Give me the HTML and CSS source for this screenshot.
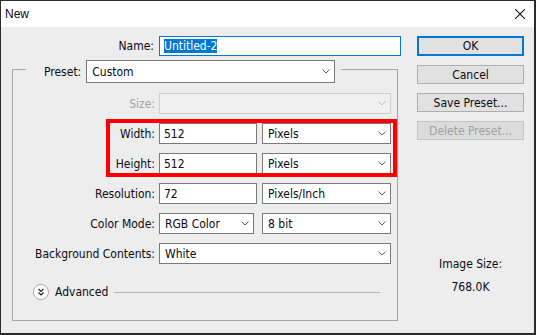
FILE: index.html
```html
<!DOCTYPE html>
<html>
<head>
    <title>New</title>
    <link rel="stylesheet" href="styles.css">
</head>
<body>
    <div class="dialog">
        <!-- Window title bar -->
        <div class="titlebar">
            <span class="title">New</span>
            <svg class="close" width="10" height="10" viewBox="0 0 10 10">
                <path d="M0 0L10 10M10 0L0 10" stroke="#111" stroke-width="1.1" fill="none"/>
            </svg>
        </div>

        <div class="content">
            <div class="main">
                <div class="name-row">
                    <span class="label">Name:</span>
                    <div class="field focused"><span class="selected">Untitled-2</span></div>
                </div>

                <fieldset class="group">
                    <legend class="preset">
                        <div class="preset-row">
                            <span class="preset-label">Preset:</span>
                            <div class="select preset-select">
                                <span>Custom</span>
                                <svg class="chevron" width="8" height="5" viewBox="0 0 8 5"><polyline points="0.5,0.5 4,4 7.5,0.5"/></svg>
                            </div>
                        </div>
                    </legend>

                    <div class="form-grid">
                        <span class="label disabled">Size:</span>
                        <div class="select disabled">
                            <span></span>
                            <svg class="chevron" width="8" height="5" viewBox="0 0 8 5"><polyline points="0.5,0.5 4,4 7.5,0.5"/></svg>
                        </div>

                        <span class="label">Width:</span>
                        <div class="pair">
                            <div class="field">512</div>
                            <div class="select">
                                <span>Pixels</span>
                                <svg class="chevron" width="8" height="5" viewBox="0 0 8 5"><polyline points="0.5,0.5 4,4 7.5,0.5"/></svg>
                            </div>
                        </div>

                        <span class="label">Height:</span>
                        <div class="pair">
                            <div class="field">512</div>
                            <div class="select">
                                <span>Pixels</span>
                                <svg class="chevron" width="8" height="5" viewBox="0 0 8 5"><polyline points="0.5,0.5 4,4 7.5,0.5"/></svg>
                            </div>
                        </div>

                        <span class="label">Resolution:</span>
                        <div class="pair">
                            <div class="field">72</div>
                            <div class="select">
                                <span>Pixels/Inch</span>
                                <svg class="chevron" width="8" height="5" viewBox="0 0 8 5"><polyline points="0.5,0.5 4,4 7.5,0.5"/></svg>
                            </div>
                        </div>

                        <span class="label">Color Mode:</span>
                        <div class="pair">
                            <div class="select mode-select">
                                <span>RGB Color</span>
                                <svg class="chevron" width="8" height="5" viewBox="0 0 8 5"><polyline points="0.5,0.5 4,4 7.5,0.5"/></svg>
                            </div>
                            <div class="select">
                                <span>8 bit</span>
                                <svg class="chevron" width="8" height="5" viewBox="0 0 8 5"><polyline points="0.5,0.5 4,4 7.5,0.5"/></svg>
                            </div>
                        </div>

                        <span class="label">Background Contents:</span>
                        <div class="select">
                            <span>White</span>
                            <svg class="chevron" width="8" height="5" viewBox="0 0 8 5"><polyline points="0.5,0.5 4,4 7.5,0.5"/></svg>
                        </div>

                        <!-- Red annotation box around width / height -->
                        <div class="highlight"></div>
                    </div>

                    <div class="advanced">
                        <svg class="adv-icon" width="16" height="16" viewBox="0 0 16 16">
                            <circle cx="8" cy="8" r="7.5" fill="#fff" stroke="#aaa"/>
                            <polyline points="5.5,5 8,7.5 10.5,5" fill="none" stroke="#222" stroke-width="1.2"/>
                            <polyline points="5.5,8.5 8,11 10.5,8.5" fill="none" stroke="#222" stroke-width="1.2"/>
                        </svg>
                        <span class="adv-text">Advanced</span>
                        <div class="adv-line"></div>
                    </div>
                </fieldset>
            </div>

            <div class="side">
                <button class="btn default">OK</button>
                <button class="btn">Cancel</button>
                <button class="btn">Save Preset...</button>
                <button class="btn" disabled>Delete Preset...</button>
                <div class="image-size">Image Size:</div>
                <div class="image-value">768.0K</div>
            </div>
        </div>
    </div>
</body>
</html>
```

FILE: styles.css
```css
body {
    margin: 0;
    font-family: "DejaVu Sans Condensed", "Liberation Sans", Arial, sans-serif;
    font-size: 12px;
    color: #0a0a14;
}
.dialog {
    width: 536px;
    height: 335px;
    box-sizing: border-box;
    border: 1px solid #2b2b2b;
    border-right-width: 2px;
    border-bottom-width: 2px;
    background-color: #ededed;
}
/* Title bar */
.titlebar {
    height: 26px;
    background-color: #fff;
    display: flex;
    align-items: center;
    justify-content: space-between;
    padding: 0 9px 0 4px;
}
.title {
    font-family: "Liberation Sans", Arial, sans-serif;
    font-size: 12px;
}
.close {
    display: block;
}
.content {
    display: flex;
    padding: 9px 0 0 11px;
}
.main {
    width: 389px;
}
.label {
    text-align: right;
    line-height: 14px;
    white-space: nowrap;
}
.label.disabled {
    color: #a3a3a3;
}
.name-row {
    display: grid;
    grid-template-columns: 142px 242px;
    column-gap: 5px;
    align-items: center;
}
/* Inputs and dropdowns */
.field,
.select {
    height: 21px;
    box-sizing: border-box;
    border: 1px solid #7a7a7a;
    background-color: #fff;
    line-height: 14px;
    display: flex;
    align-items: center;
}
.field {
    padding: 0 4px;
}
.name-row .field {
    height: 20px;
}
.field.focused {
    border-color: #0078d7;
}
.selected {
    background-color: #0078d7;
    color: #fff;
}
.select {
    justify-content: space-between;
    padding: 0 4px 0 5px;
}
.chevron {
    display: block;
    fill: none;
    stroke: #5f5f5f;
    stroke-width: 1;
}
.select.disabled {
    background-color: #f0f0f0;
    border-color: #cfcfcf;
}
.select.disabled .chevron {
    stroke: #bdbdbd;
}
/* Preset group box */
.group {
    margin: 4px 0 0;
    width: 386px;
    box-sizing: border-box;
    border: 1px solid #a6a6a6;
    padding: 15px 6px 20px 13px;
    min-width: 0;
}
.preset {
    padding: 0 6px 0 18px;
    height: 18px;
}
.preset-row {
    display: flex;
    align-items: center;
    gap: 5px;
    height: 23px;
}
.preset-select {
    width: 249px;
    height: 23px;
}
.form-grid {
    position: relative;
    margin-left: 7px;
    display: grid;
    grid-template-columns: 122px 232px;
    column-gap: 4px;
    row-gap: 9px;
    grid-auto-rows: 21px;
    align-items: center;
}
.pair {
    display: grid;
    grid-template-columns: 98px 129px;
    justify-content: space-between;
}
.mode-select {
    width: 95px;
}
.highlight {
    position: absolute;
    left: 73px;
    top: 26px;
    width: 291px;
    height: 58px;
    box-sizing: border-box;
    border: 4px solid #ff0000;
    pointer-events: none;
}
/* Advanced toggle */
.advanced {
    display: flex;
    align-items: center;
    margin: 20px 0 0 7px;
    height: 16px;
}
.adv-icon {
    display: block;
}
.adv-text {
    margin-left: 6px;
}
.adv-line {
    flex: 1;
    border-top: 1px solid #b4b4b4;
    margin: 0 11px 0 6px;
}
/* Right column */
.side {
    width: 107px;
    margin-left: 16px;
    display: flex;
    flex-direction: column;
    text-align: center;
}
.btn {
    height: 19px;
    box-sizing: border-box;
    border: 1px solid #adadad;
    background-color: #e1e1e1;
    font: inherit;
    color: inherit;
    padding: 0;
    margin: 0 0 9px;
    line-height: 14px;
}
.btn.default {
    height: 20px;
    border: 2px solid #0078d7;
}
.btn:disabled {
    color: #a0a0a0;
    background-color: #dcdcdc;
    border-color: #c4c4c4;
}
.image-size {
    margin-top: 108px;
    line-height: 15px;
}
.image-value {
    margin-top: 8px;
    line-height: 15px;
}
```
